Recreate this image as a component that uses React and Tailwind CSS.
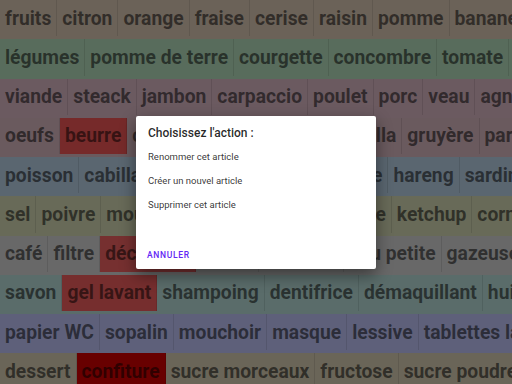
import React from 'react';

const rows = [
  { bg: 'bg-[#6b6258]', items: ['fruits', 'citron', 'orange', 'fraise', 'cerise', 'raisin', 'pomme', 'banane', 'kiwi'] },
  { bg: 'bg-[#586c5c]', items: ['légumes', 'pomme de terre', 'courgette', 'concombre', 'tomate', 'carotte'] },
  { bg: 'bg-[#6b5a60]', items: ['viande', 'steack', 'jambon', 'carpaccio', 'poulet', 'porc', 'veau', 'agneau'] },
  { bg: 'bg-[#6a5a5e]', items: ['oeufs', { name: 'beurre', red: 'bg-[#762a2a]' }, 'crème fraîche', 'lait', 'mozzarella', 'gruyère', 'parmesan'] },
  { bg: 'bg-[#5a6670]', items: ['poisson', 'cabillaud', 'saumon', 'truite', 'crevette', 'hareng', 'sardine'] },
  { bg: 'bg-[#686a58]', items: ['sel', 'poivre', 'moutarde', 'mayonnaise', 'vinaigre', 'ketchup', 'cornichons'] },
  { bg: 'bg-[#686868]', items: ['café', 'filtre', { name: 'décaféiné', red: 'bg-[#763030]' }, 'cacao', 'chocolat', 'eau petite', 'gazeuse'] },
  { bg: 'bg-[#5a6c6a]', items: ['savon', { name: 'gel lavant', red: 'bg-[#762e2e]' }, 'shampoing', 'dentifrice', 'démaquillant', 'huile'] },
  { bg: 'bg-[#5e607a]', items: ['papier WC', 'sopalin', 'mouchoir', 'masque', 'lessive', 'tablettes lave-vaisselle'] },
  { bg: 'bg-[#6a6558]', items: ['dessert', { name: 'confiture', red: 'bg-[#680000]' }, 'sucre morceaux', 'fructose', 'sucre poudre'] },
];

export default function App() {
  return (
    <div className="relative w-[512px] h-[384px] overflow-hidden font-['Roboto',sans-serif]">
      {/* shopping list rows */}
      <div className="flex flex-col">
        {rows.map((row, i) => (
          <div key={i} className={`flex h-[39.25px] shrink-0 pb-[3px] whitespace-nowrap overflow-hidden ${row.bg}`}>
            {row.items.map((it, j) => {
              const name = typeof it === 'string' ? it : it.name;
              const red = typeof it === 'string' ? '' : it.red;
              return (
                <div
                  key={j}
                  className={`flex items-center shrink-0 h-full px-[5px] pt-[2px] border-r border-black/10 text-[19.3px] font-bold text-black/55 ${red}`}
                >
                  {name}
                </div>
              );
            })}
          </div>
        ))}
      </div>

      {/* dialog */}
      <div className="absolute inset-0 flex items-center justify-center">
        <div className="w-[240px] h-[153px] bg-white rounded-[2px] shadow-[0_6px_16px_rgba(0,0,0,0.45)] flex flex-col">
          <div className="pl-[12px] pt-[9px] text-[12px] leading-[16px] font-medium text-black/85">
            Choisissez l'action :
          </div>
          <div className="mt-[4px] flex flex-col text-[9.5px] text-black/80">
            <div className="h-[24px] leading-[24px] pl-[12px]">Renommer cet article</div>
            <div className="h-[24px] leading-[24px] pl-[12px]">Créer un nouvel article</div>
            <div className="h-[24px] leading-[24px] pl-[12px]">Supprimer cet article</div>
          </div>
          <div className="flex-1" />
          <div className="pb-[4px] pl-[11px]">
            <span className="text-[8.5px] leading-[16px] font-medium tracking-[0.7px] text-[#6226f5]">ANNULER</span>
          </div>
        </div>
      </div>
    </div>
  );
}
